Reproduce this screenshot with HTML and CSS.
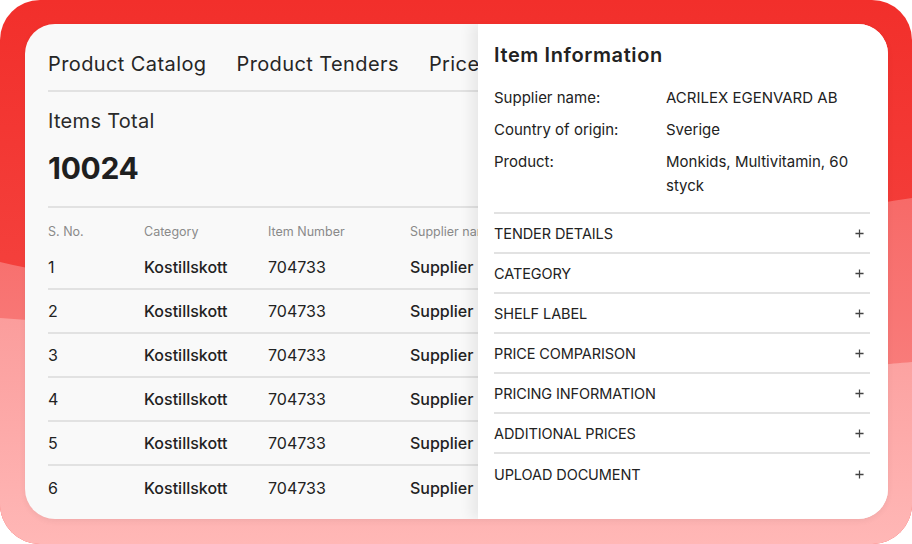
FILE: index.html
```html
<!DOCTYPE html>
<html lang="en">
<head>
<meta charset="UTF-8">
<title>Product Catalog</title>
<link rel="stylesheet" href="styles.css">
</head>
<body>
<div class="frame">
  <svg class="waves" width="912" height="544" viewBox="0 0 912 544" preserveAspectRatio="none">
    <defs>
      <linearGradient id="gTop" x1="0" y1="0" x2="0" y2="1">
        <stop offset="0" stop-color="#f22f2b"/>
        <stop offset="1" stop-color="#f6514d"/>
      </linearGradient>
      <linearGradient id="gMid" x1="0" y1="0" x2="0" y2="1">
        <stop offset="0" stop-color="#f76a68"/>
        <stop offset="1" stop-color="#fa8e8d"/>
      </linearGradient>
      <linearGradient id="gLow" x1="0" y1="0" x2="0" y2="1">
        <stop offset="0" stop-color="#fb9d9c"/>
        <stop offset="1" stop-color="#ffb7b6"/>
      </linearGradient>
    </defs>
    <rect width="912" height="544" fill="url(#gTop)"/>
    <path d="M0 262 C 120 290, 300 300, 500 270 S 800 215, 912 198 L 912 544 L 0 544 Z" fill="url(#gMid)"/>
    <path d="M0 318 C 200 330, 420 390, 640 380 S 840 368, 912 362 L 912 544 L 0 544 Z" fill="url(#gLow)"/>
  </svg>

  <div class="card">
    <div class="main">
      <nav class="tabs">
        <span>Product Catalog</span>
        <span>Product Tenders</span>
        <span>Price Comparison</span>
      </nav>

      <div class="summary">
        <div class="summary-label">Items Total</div>
        <div class="summary-value">10024</div>
      </div>

      <div class="table">
        <div class="row head">
          <span>S. No.</span><span>Category</span><span>Item Number</span><span>Supplier name</span>
        </div>
        <div class="row"><span>1</span><span class="strong">Kostillskott</span><span>704733</span><span class="strong">Supplier</span></div>
        <div class="row"><span>2</span><span class="strong">Kostillskott</span><span>704733</span><span class="strong">Supplier</span></div>
        <div class="row"><span>3</span><span class="strong">Kostillskott</span><span>704733</span><span class="strong">Supplier</span></div>
        <div class="row"><span>4</span><span class="strong">Kostillskott</span><span>704733</span><span class="strong">Supplier</span></div>
        <div class="row"><span>5</span><span class="strong">Kostillskott</span><span>704733</span><span class="strong">Supplier</span></div>
        <div class="row"><span>6</span><span class="strong">Kostillskott</span><span>704733</span><span class="strong">Supplier</span></div>
      </div>
    </div>

    <aside class="panel">
      <h2>Item Information</h2>
      <dl class="info">
        <dt>Supplier name:</dt><dd>ACRILEX EGENVARD AB</dd>
        <dt>Country of origin:</dt><dd>Sverige</dd>
        <dt>Product:</dt><dd>Monkids, Multivitamin, 60 styck</dd>
      </dl>
      <ul class="accordion">
        <li>TENDER DETAILS<svg class="plus" viewBox="0 0 10 10"><path d="M5 0.5v9M0.5 5h9"/></svg></li>
        <li>CATEGORY<svg class="plus" viewBox="0 0 10 10"><path d="M5 0.5v9M0.5 5h9"/></svg></li>
        <li>SHELF LABEL<svg class="plus" viewBox="0 0 10 10"><path d="M5 0.5v9M0.5 5h9"/></svg></li>
        <li>PRICE COMPARISON<svg class="plus" viewBox="0 0 10 10"><path d="M5 0.5v9M0.5 5h9"/></svg></li>
        <li>PRICING INFORMATION<svg class="plus" viewBox="0 0 10 10"><path d="M5 0.5v9M0.5 5h9"/></svg></li>
        <li>ADDITIONAL PRICES<svg class="plus" viewBox="0 0 10 10"><path d="M5 0.5v9M0.5 5h9"/></svg></li>
        <li>UPLOAD DOCUMENT<svg class="plus" viewBox="0 0 10 10"><path d="M5 0.5v9M0.5 5h9"/></svg></li>
      </ul>
    </aside>
  </div>
</div>
</body>
</html>
```

FILE: styles.css
```css
* { box-sizing: border-box; }
body { margin: 0; background: #fff; font-family: Inter, "Open Sans", sans-serif; color: #222; }

.frame { position: relative; width: 912px; height: 544px; border-radius: 40px; overflow: hidden; padding: 24px 24px 25px 25px; }
.waves { position: absolute; left: 0; top: 0; }

.card { position: relative; display: flex; width: 863px; height: 495px; border-radius: 30px; background: #f9f9f9; overflow: hidden; box-shadow: 0 2px 6px rgba(0, 0, 0, 0.06); }

/* left side: catalog */
.main { width: 453px; flex: none; padding-left: 23px; overflow: hidden; }
.tabs { display: flex; gap: 30px; white-space: nowrap; padding: 28px 0 14px; border-bottom: 2px solid #e2e2e2; width: 700px; font-size: 20px; line-height: 24px; letter-spacing: 0.4px; color: #262626; }
.summary { padding: 17px 0 20px; border-bottom: 2px solid #e2e2e2; width: 700px; }
.summary-label { font-size: 20px; line-height: 24px; letter-spacing: 0.3px; color: #2a2a2a; }
.summary-value { margin-top: 17px; font-size: 30px; line-height: 36px; font-weight: 700; color: #1f1f1f; letter-spacing: -0.3px; }

.table { width: 700px; }
.row { display: grid; grid-template-columns: 96px 124px 142px 200px; align-items: center; height: 44px; border-bottom: 2px solid #e2e2e2; font-size: 16px; color: #222; white-space: nowrap; }
.row:last-child { border-bottom: none; }
.row.head { height: auto; padding: 16px 0 6px; border-bottom: none; font-size: 12.5px; line-height: 16px; color: #8a8a8a; }
.row .strong { font-weight: 500; }

/* right side: item panel */
.panel { width: 410px; flex: none; background: #fff; padding: 17px 18px 0 16px; box-shadow: -7px 0 12px rgba(0, 0, 0, 0.07); }
.panel h2 { margin: 0; font-size: 20px; line-height: 28px; font-weight: 600; letter-spacing: 0.6px; color: #222; }
.info { display: grid; grid-template-columns: 172px 1fr; row-gap: 8px; margin: 17px 0 0; padding-bottom: 14px; border-bottom: 2px solid #e2e2e2; font-size: 15px; line-height: 24px; color: #222; }
.info dt, .info dd { margin: 0; }

.accordion { list-style: none; margin: 0; padding: 0; }
.accordion li { display: flex; align-items: center; justify-content: space-between; height: 40px; padding-right: 6px; border-bottom: 2px solid #e2e2e2; font-size: 14.5px; letter-spacing: -0.1px; color: #222; }
.accordion li:last-child { border-bottom: none; }
.plus { width: 9px; height: 9px; fill: none; stroke: #444; stroke-width: 1.4; }
```
